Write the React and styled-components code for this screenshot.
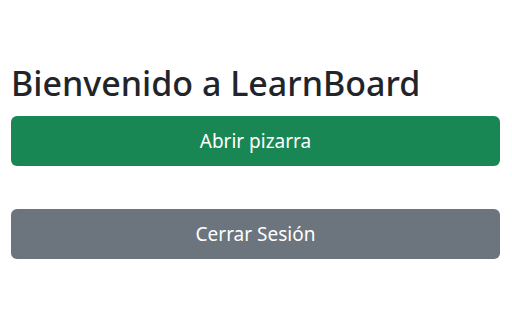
import React from 'react';
import styled, { createGlobalStyle } from 'styled-components';

const GlobalStyle = createGlobalStyle`
  body {
    margin: 0;
    background: #fff;
    font-family: "Noto Sans", "Open Sans", sans-serif;
    color: #212529;
  }
`;

const Page = styled.div`
  padding: 0 12px 0 11px;
`;

const Title = styled.h1`
  margin: 0;
  padding-top: 62px;
  font-size: 34px;
  font-weight: 500;
  line-height: 42px;
`;

const Button = styled.button`
  display: block;
  width: 100%;
  height: 50px;
  border: 0;
  border-radius: 6px;
  font-family: inherit;
  font-size: 19px;
  color: #fff;
  background: ${(p) => (p.$variant === 'secondary' ? '#6c757d' : '#198754')};
  margin-top: ${(p) => p.$gap}px;
  cursor: pointer;
`;

export default function App() {
  return (
    <Page>
      <GlobalStyle />
      <Title>Bienvenido a LearnBoard</Title>
      <Button $gap={12}>Abrir pizarra</Button>
      <Button $variant="secondary" $gap={43}>
        Cerrar Sesión
      </Button>
    </Page>
  );
}
